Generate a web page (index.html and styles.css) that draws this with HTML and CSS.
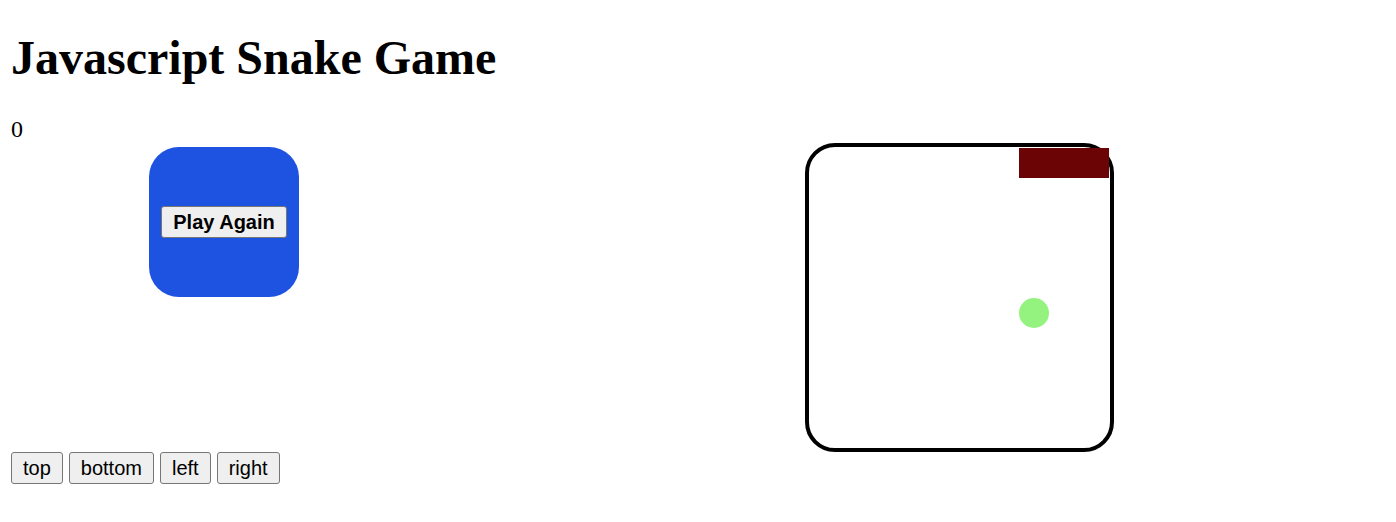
FILE: index.html
```html
<!DOCTYPE html>
<html lang="en">
<head>
<meta charset="utf-8">
<title>Javascript Snake Game</title>
<link rel="stylesheet" href="styles.css">
</head>
<body>
<h1 class="title">Javascript Snake Game</h1>
<div class="score">0</div>
<main class="stage">
  <div class="popup"><button class="play-again" type="button">Play Again</button></div>
  <div class="grid">
    <div class="snake"></div>
    <div class="apple"></div>
  </div>
</main>
<div class="controls">
  <button class="key" type="button">top</button>
  <button class="key" type="button">bottom</button>
  <button class="key" type="button">left</button>
  <button class="key" type="button">right</button>
</div>
</body>
</html>
```

FILE: styles.css
```css
body {
  margin: 0;
  padding: 28px 11px;
  background: #fff;
  color: #000;
  font-family: "Liberation Serif", "Times New Roman", serif;
  font-size: 24px;
}

.title {
  margin: 0 0 28px;
  font-size: 48px;
  line-height: 60px;
}

.score {
  line-height: 27px;
}

.stage {
  display: flex;
  align-items: flex-start;
  justify-content: space-between;
  padding: 0 271px 0 138px;
}

.popup {
  display: flex;
  align-items: center;
  justify-content: center;
  width: 150px;
  height: 150px;
  margin-top: 4px;
  border-radius: 30px;
  background: #1e52e1;
}

.grid {
  display: grid;
  grid-template: repeat(10, 30px) / repeat(10, 30px);
  padding: 1px 1px 0 0;
  border: 4px solid #000;
  border-radius: 30px;
}

.snake {
  grid-area: 1 / 8 / 2 / 11;
  background: #6b0505;
}

.apple {
  grid-area: 6 / 8;
  border-radius: 50%;
  background: #94f27f;
}

.controls {
  display: flex;
  gap: 6px;
}

.key,
.play-again {
  height: 32px;
  padding: 0 11px;
  border: 1px solid #767676;
  border-radius: 3px;
  background: #efefef;
  color: #000;
  font-family: "Liberation Sans", Arial, sans-serif;
  font-size: 20px;
}

.play-again {
  font-weight: bold;
}
```
